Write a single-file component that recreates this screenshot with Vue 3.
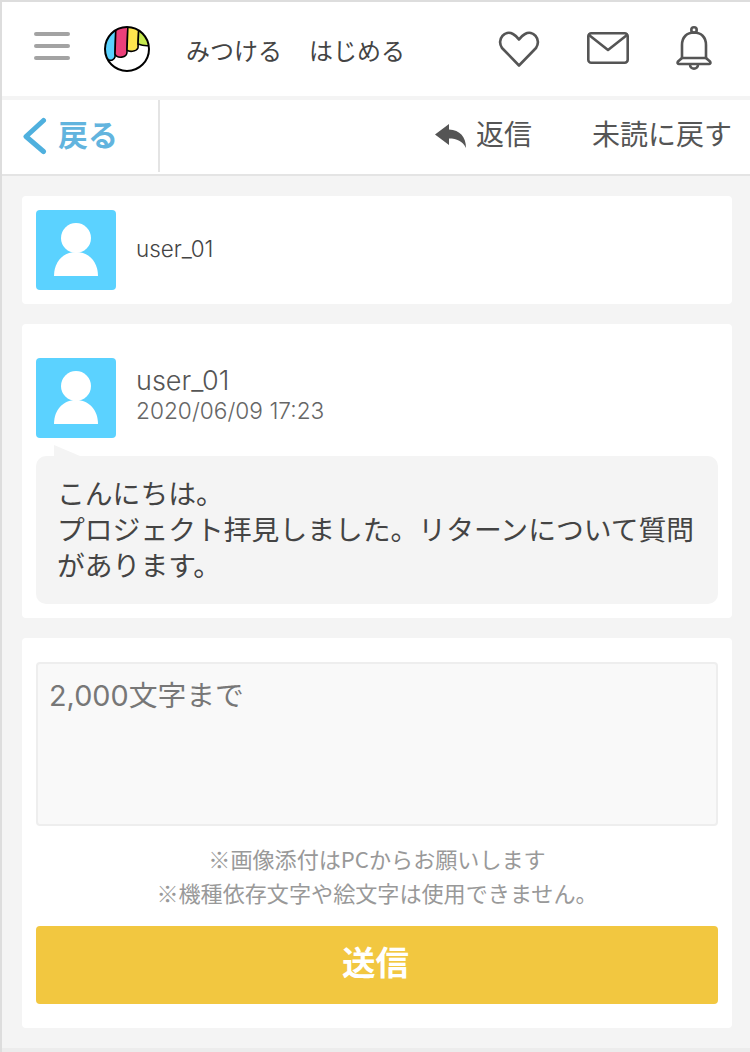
<script setup>
const notes = ['※画像添付はPCからお願いします', '※機種依存文字や絵文字は使用できません。']
</script>

<template>
  <div class="page">
    <header class="top">
      <div class="burger"><i></i><i></i><i></i></div>
      <svg class="logo" width="48" height="48" viewBox="0 0 48 48">
        <defs><clipPath id="lc"><circle cx="24" cy="24" r="22"/></clipPath></defs>
        <circle cx="24" cy="24" r="22.5" fill="#fff"/>
        <g clip-path="url(#lc)" stroke="#000" stroke-width="1.6">
          <path d="M-2 -2H13L12 32C11 35 8 36 6 35L-2 31Z" fill="#5bd2ff"/>
          <path d="M13 -2H25L24 27C24 33 14 34 12 29Z" fill="#ec407a"/>
          <path d="M25 -2H36L35 23C33 27 26 27 24 25Z" fill="#ffe64d"/>
          <path d="M36 -2H50V20C46 21 40 21 35 19Z" fill="#c5e84f"/>
        </g>
        <circle cx="24" cy="24" r="22" fill="none" stroke="#000" stroke-width="2"/>
      </svg>
      <nav class="links"><span>みつける</span><span>はじめる</span></nav>
      <div class="icons">
        <svg class="heart" width="42" height="38" viewBox="0 0 42 38" fill="none" stroke="#555" stroke-width="2.6" stroke-linejoin="round" stroke-linecap="round">
          <path d="M21 35.5 4 18C-1.5 9 7 -0.5 15 4c3 1.6 4.6 3.7 6 5.5 1.4-1.8 3-3.9 6-5.5 8-4.5 16.5 5 11 14Z"/>
        </svg>
        <svg width="42" height="32" viewBox="0 0 42 32" fill="none" stroke="#555" stroke-width="2.6" stroke-linejoin="round" stroke-linecap="round">
          <rect x="1.3" y="1.3" width="39.4" height="29.4" rx="3"/>
          <path d="M2 3 21 18 40 3"/>
        </svg>
        <svg width="36" height="44" viewBox="0 0 36 44" fill="none" stroke="#555" stroke-width="2.6" stroke-linejoin="round" stroke-linecap="round">
          <circle cx="18" cy="4" r="2.7"/>
          <path d="M6 32V19C6 11 11 6.5 18 6.5S30 11 30 19V32"/>
          <path d="M6 32 2 35.5C1 37 2 38 3 38H33C34 38 35 37 34 35.5L30 32Z"/>
          <path d="M14 38.5C14 44 22 44 22 38.5"/>
        </svg>
      </div>
    </header>

    <div class="sub">
      <a class="back">
        <svg width="26" height="38" viewBox="0 0 26 38" fill="none" stroke="#4fb0de" stroke-width="5" stroke-linecap="round" stroke-linejoin="round">
          <path d="M21.5 3.5 4 19.5 21.5 34.5"/>
        </svg>
        <span>戻る</span>
      </a>
      <div class="actions">
        <span class="reply">
          <svg width="32" height="24" viewBox="0 0 32 24"><path fill="#555" d="M14 0 0 10.5 14 21V14.5C22 14.5 27.5 17 31 24 31 13 25 6 14 5.5Z"/></svg>
          <span>返信</span>
        </span>
        <span class="unread">未読に戻す</span>
      </div>
    </div>

    <main class="body">
      <section class="card head">
        <div class="avatar">
          <svg width="80" height="80" viewBox="0 0 80 80" fill="#fff"><circle cx="40" cy="28" r="15"/><path d="M18 66C18 52 27 42 40 42S62 52 62 66Z"/></svg>
        </div>
        <span class="name-small">user_01</span>
      </section>

      <section class="card msg">
        <div class="meta">
          <div class="avatar">
            <svg width="80" height="80" viewBox="0 0 80 80" fill="#fff"><circle cx="40" cy="28" r="15"/><path d="M18 66C18 52 27 42 40 42S62 52 62 66Z"/></svg>
          </div>
          <div class="who">
            <div class="name">user_01</div>
            <div class="date">2020/06/09 17:23</div>
          </div>
        </div>
        <div class="bubble">こんにちは。<br>プロジェクト拝見しました。リターンについて質問があります。</div>
      </section>

      <section class="card form">
        <div class="input">2,000文字まで</div>
        <p v-for="n in notes" :key="n" class="note">{{ n }}</p>
        <button class="send">送信</button>
      </section>
    </main>
    <div class="foot"></div>
  </div>
</template>

<style scoped>
.page {
  width: 750px;
  height: 1052px;
  box-sizing: border-box;
  border-top: 2px solid #ddd;
  border-left: 2px solid #ddd;
  background: #f4f4f4;
  font-family: Inter, "Noto Sans CJK JP", sans-serif;
  color: #444;
  overflow: hidden;
  display: flex;
  flex-direction: column;
}
.top {
  height: 94px;
  flex: none;
  background: #fff;
  display: flex;
  align-items: center;
  box-sizing: border-box;
  padding-left: 32px;
}
.burger { width: 36px; display: flex; flex-direction: column; gap: 8px; margin-top: -6px; }
.burger i { height: 4px; border-radius: 2px; background: #a3a3a3; display: block; }
.logo { margin-left: 33px; flex: none; }
.links {
  margin-left: 35px;
  display: flex;
  gap: 27px;
  font-size: 24px;
  line-height: 30px;
  margin-top: 6px;
}
.icons {
  margin-left: auto;
  padding-right: 38px;
  display: flex;
  align-items: center;
  gap: 46px;
  margin-top: -3px;
}
.heart { margin-top: 3px; margin-left: -1px; margin-right: 1px; }
.icons svg:last-child { margin-left: 1px; }
.sub {
  margin-top: 4px;
  height: 76px;
  flex: none;
  box-sizing: border-box;
  background: #fff;
  border-bottom: 2px solid #e4e4e4;
  display: flex;
}
.back {
  width: 158px;
  height: 72px;
  box-sizing: border-box;
  border-right: 2px solid #e4e4e4;
  display: flex;
  align-items: center;
  gap: 10px;
  padding-left: 20px;
  color: #62b4de;
  font-size: 30px;
  font-weight: 700;
}
.back span { margin-top: -6px; }
.actions {
  flex: 1;
  display: flex;
  align-items: center;
  justify-content: flex-end;
  padding-right: 18px;
  font-size: 28px;
  line-height: 36px;
  color: #555;
}
.reply { display: flex; align-items: center; gap: 9px; margin-right: 60px; }
.reply svg { margin-top: -2px; }
.reply span, .unread { margin-top: -5px; }
.body {
  flex: 1;
  padding: 20px 20px 0;
  display: flex;
  flex-direction: column;
  gap: 20px;
}
.card { width: 710px; background: #fff; border-radius: 4px; box-sizing: border-box; padding: 0 14px; }
.head { height: 108px; display: flex; align-items: center; gap: 20px; }
.avatar { width: 80px; height: 80px; flex: none; background: #5bd2ff; border-radius: 4px; }
.avatar svg { display: block; }
.name-small { font-size: 22.4px; color: #444; line-height: 28px; font-weight: 300; margin-top: -3px; }
.msg { height: 294px; padding-top: 34px; }
.meta { display: flex; gap: 20px; }
.who { padding-top: 7px; }
.name { font-size: 27px; line-height: 32px; color: #555; font-weight: 300; }
.date { font-size: 22.7px; line-height: 26px; color: #666; font-weight: 300; margin-top: 1px; }
.bubble {
  position: relative;
  margin-top: 18px;
  height: 148px;
  box-sizing: border-box;
  background: #f4f4f4;
  border-radius: 10px;
  padding: 20px 14px 0 21px;
  font-size: 27.8px;
  line-height: 36px;
  color: #444;
}
.bubble::before {
  content: "";
  position: absolute;
  left: 18px;
  top: -11px;
  border-right: 26px solid transparent;
  border-bottom: 11px solid #f4f4f4;
}
.form { height: 390px; padding-top: 24px; }
.input {
  height: 164px;
  box-sizing: border-box;
  border: 2px solid #eee;
  border-radius: 4px;
  background: #f9f9f9;
  padding: 12px 11px;
  font-size: 28.8px;
  line-height: 40px;
  color: #777;
}
.note {
  margin: 0;
  text-align: center;
  font-family: "Noto Sans CJK JP", sans-serif;
  font-size: 22.1px;
  line-height: 34px;
  color: #999;
}
.input + .note { margin-top: 15px; }
.send {
  display: block;
  margin-top: 17px;
  width: 100%;
  height: 78px;
  border: 0;
  border-radius: 4px;
  background: #f2c740;
  color: #fff;
  font-family: inherit;
  font-size: 33.5px;
  line-height: 70px;
  padding: 0 3px 4px 0;
  font-weight: 700;
}
.foot { height: 4px; background: #ececec; flex: none; }
</style>
